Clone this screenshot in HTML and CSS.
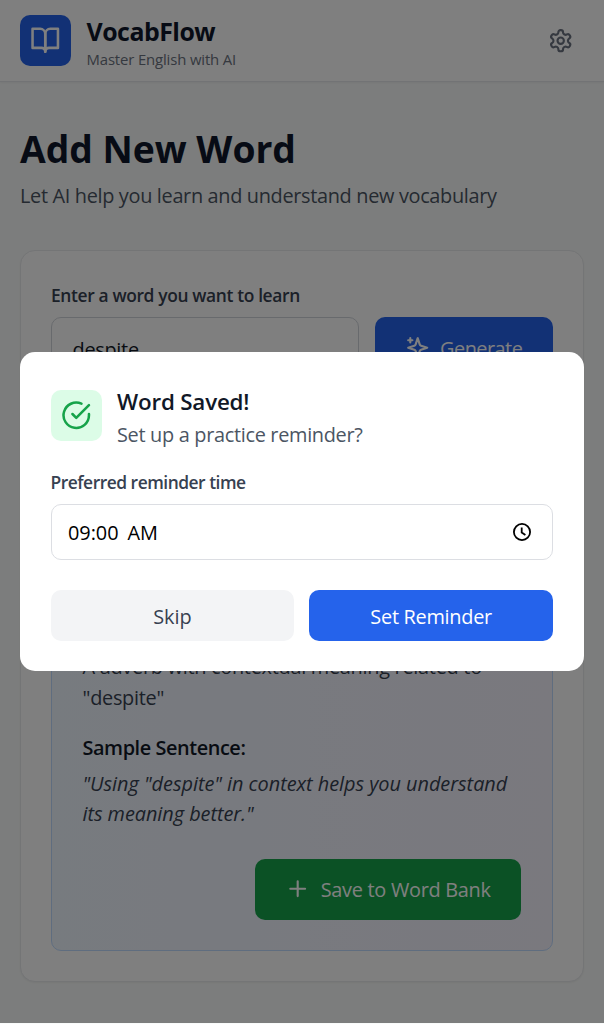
FILE: index.html
```
<!DOCTYPE html>
<html lang="en">
<head>
<meta charset="utf-8">
<title>VocabFlow</title>
<link rel="stylesheet" href="styles.css">
</head>
<body>
<header class="topbar">
  <div class="logo">
    <svg class="icon icon-lg" viewBox="0 0 24 24"><path d="M2 3h6a4 4 0 0 1 4 4v14a3 3 0 0 0-3-3H2z"/><path d="M22 3h-6a4 4 0 0 0-4 4v14a3 3 0 0 1 3-3h7z"/></svg>
  </div>
  <div class="brand">
    <div class="brand-name">VocabFlow</div>
    <div class="brand-tag">Master English with AI</div>
  </div>
  <svg class="icon settings" viewBox="0 0 24 24"><path d="M12.22 2h-.44a2 2 0 0 0-2 2v.18a2 2 0 0 1-1 1.73l-.43.25a2 2 0 0 1-2 0l-.15-.08a2 2 0 0 0-2.73.73l-.22.38a2 2 0 0 0 .73 2.73l.15.1a2 2 0 0 1 1 1.72v.51a2 2 0 0 1-1 1.74l-.15.09a2 2 0 0 0-.73 2.73l.22.38a2 2 0 0 0 2.73.73l.15-.08a2 2 0 0 1 2 0l.43.25a2 2 0 0 1 1 1.73V20a2 2 0 0 0 2 2h.44a2 2 0 0 0 2-2v-.18a2 2 0 0 1 1-1.73l.43-.25a2 2 0 0 1 2 0l.15.08a2 2 0 0 0 2.73-.73l.22-.39a2 2 0 0 0-.73-2.73l-.15-.08a2 2 0 0 1-1-1.74v-.5a2 2 0 0 1 1-1.74l.15-.09a2 2 0 0 0 .73-2.73l-.22-.38a2 2 0 0 0-2.73-.73l-.15.08a2 2 0 0 1-2 0l-.43-.25a2 2 0 0 1-1-1.73V4a2 2 0 0 0-2-2z"/><circle cx="12" cy="12" r="3"/></svg>
</header>
<main class="page">
  <h1 class="title">Add New Word</h1>
  <p class="subtitle">Let AI help you learn and understand new vocabulary</p>
  <section class="card">
    <div class="label word-label">Enter a word you want to learn</div>
    <div class="word-row">
      <div class="word-input">despite</div>
      <div class="btn btn-generate">
        <svg class="icon" viewBox="0 0 24 24"><path d="m12 3-1.912 5.813a2 2 0 0 1-1.275 1.275L3 12l5.813 1.912a2 2 0 0 1 1.275 1.275L12 21l1.912-5.813a2 2 0 0 1 1.275-1.275L21 12l-5.813-1.912a2 2 0 0 1-1.275-1.275L12 3Z"/><path d="M5 3v4M19 17v4M3 5h4M17 19h4"/></svg>
        <span class="btn-text generate-text">Generate</span>
      </div>
    </div>
    <div class="result">
      <p class="meaning">A adverb with contextual meaning related to<br>"despite"</p>
      <h4 class="result-heading">Sample Sentence:</h4>
      <p class="sentence"><span class="sentence-line">"Using "despite" in context helps you understand</span><br>its meaning better."</p>
      <div class="btn btn-save">
        <svg class="icon" viewBox="0 0 24 24"><path d="M5 12h14M12 5v14"/></svg>
        <span class="btn-text">Save to Word Bank</span>
      </div>
    </div>
  </section>
</main>
<div class="overlay">
  <div class="modal">
    <div class="modal-head">
      <div class="check-box">
        <svg class="icon icon-lg" viewBox="0 0 24 24"><path d="M22 11.08V12a10 10 0 1 1-5.93-9.14"/><path d="m9 11 3 3L22 4"/></svg>
      </div>
      <div class="modal-text">
        <h3 class="modal-title">Word Saved!</h3>
        <p class="modal-sub">Set up a practice reminder?</p>
      </div>
    </div>
    <div class="label time-label">Preferred reminder time</div>
    <div class="time-input">
      <span class="time-value">09:00</span><span class="time-value">AM</span>
      <svg class="clock" viewBox="0 0 20 20"><circle cx="10" cy="10" r="8.1"/><path d="M9.7 5.6v4.9l3.7 2.5"/></svg>
    </div>
    <div class="actions">
      <div class="btn btn-skip">Skip</div>
      <div class="btn btn-set">Set Reminder</div>
    </div>
  </div>
</div>
</body>
</html>
```
FILE: styles.css
```
* { box-sizing: border-box; margin: 0; padding: 0; }

html { height: 100%; overflow: hidden; }

body {
  height: 1024px;
  background: #f9fbfa;
  font-family: "Open Sans", "Noto Sans", sans-serif;
  font-size: 19.9px;
  line-height: 30.5px;
  letter-spacing: -0.28px;
  color: #374151;
  white-space: nowrap;
}

.icon {
  flex: none;
  width: 25.4px;
  height: 25.4px;
  fill: none;
  stroke: currentColor;
  stroke-width: 2;
  stroke-linecap: round;
  stroke-linejoin: round;
}
.icon-lg { width: 30.5px; height: 30.5px; }

.topbar {
  display: flex;
  align-items: center;
  height: 82px;
  padding: 0 30.5px 0 20px;
  background: #fff;
  border-bottom: 1px solid #e5e7eb;
  box-shadow: 0 1px 2px rgba(0, 0, 0, 0.05);
}
.logo {
  display: flex;
  align-items: center;
  justify-content: center;
  width: 51px;
  height: 51px;
  margin-right: 15.5px;
  border-radius: 10px;
  background: #2563eb;
  color: #fff;
}
.brand { flex: 1; padding-top: 2px; }
.brand-name {
  font-size: 24.9px;
  font-weight: 700;
  line-height: 35px;
  letter-spacing: -0.5px;
  color: #0f172a;
}
.brand-tag {
  font-size: 14.9px;
  line-height: 20px;
  letter-spacing: -0.14px;
  color: #6b7280;
}
.settings { color: #6b7280; }

.page { padding: 46px 20px 0; }
.title {
  font-size: 37.3px;
  font-weight: 700;
  line-height: 41px;
  letter-spacing: -0.03px;
  color: #0f172a;
}
.subtitle {
  margin-top: 12px;
  letter-spacing: -0.33px;
  color: #4b5563;
}
.card {
  height: 732px;
  margin-top: 38.5px;
  padding: 32px 30.5px 31px 30px;
  border: 1px solid #e8eaed;
  border-radius: 15px;
  background: #fff;
  box-shadow: 0 1px 2px rgba(0, 0, 0, 0.05);
}
.label {
  font-size: 17.4px;
  font-weight: 600;
  line-height: 25px;
  color: #374151;
}
.word-label { letter-spacing: -0.36px; }
.word-row {
  display: flex;
  gap: 15.5px;
  height: 61px;
  margin-top: 9px;
}
.word-input {
  flex: 1;
  padding: 17px 20.5px 0;
  border: 1px solid #d1d5db;
  border-radius: 10px;
  color: #111827;
}
.btn {
  display: flex;
  align-items: center;
  justify-content: center;
  gap: 10px;
  border-radius: 10px;
  color: #fff;
}
.btn-text { padding-top: 3px; }
.btn-generate { width: 178px; padding-top: 1px; background: #2563eb; }
.generate-text { letter-spacing: -0.52px; }

.result {
  display: flex;
  flex-direction: column;
  justify-content: flex-end;
  height: 542px;
  margin-top: 31px;
  padding: 30.5px;
  border: 1px solid #bfdbfe;
  border-radius: 10px;
  background: linear-gradient(to right, #eff6ff, #f4f2fd);
}
.result-heading {
  margin: 20px 0 5px;
  font-size: 19.9px;
  font-weight: 600;
  letter-spacing: -0.43px;
  color: #111827;
}
.sentence { font-style: italic; letter-spacing: -0.05px; }
.sentence-line { letter-spacing: -0.03px; }
.btn-save {
  align-self: flex-end;
  width: 266px;
  height: 61px;
  margin-top: 29px;
  background: #16a34a;
}

.overlay {
  position: absolute;
  inset: 0 0 auto;
  display: flex;
  align-items: center;
  height: 1023px;
  padding: 0 20px;
  background: rgba(0, 0, 0, 0.5);
}
.modal {
  width: 100%;
  padding: 30.5px 31px 30.5px 30.5px;
  border-radius: 15px;
  background: #fff;
}
.modal-head { display: flex; align-items: center; gap: 15.5px; }
.modal-text { margin: 2px 0 -2px; }
.check-box {
  display: flex;
  align-items: center;
  justify-content: center;
  width: 51px;
  height: 51px;
  border-radius: 10px;
  background: #dcfce7;
  color: #16a34a;
}
.modal-title {
  font-size: 22.4px;
  font-weight: 600;
  line-height: 35.5px;
  letter-spacing: -0.2px;
  color: #111827;
}
.modal-sub { color: #4b5563; letter-spacing: -0.31px; }
.time-label { margin-top: 22px; letter-spacing: -0.48px; }
.time-input {
  display: flex;
  align-items: center;
  gap: 9px;
  height: 56px;
  margin-top: 8.5px;
  padding: 0 20px 0 16.5px;
  border: 1px solid #dcdee3;
  border-radius: 10px;
  color: #000;
}
.time-value { padding-top: 3px; letter-spacing: -0.05px; }
.clock {
  width: 20px;
  height: 20px;
  margin-left: auto;
  fill: none;
  stroke: #000;
  stroke-width: 1.8;
}
.actions {
  display: grid;
  grid-template-columns: 1fr 1fr;
  gap: 15px;
  margin-top: 30px;
}
.actions .btn { height: 51px; padding-top: 4px; }
.btn-skip { background: #f3f4f6; color: #374151; letter-spacing: -0.1px; }
.btn-set { background: #2563eb; }
```
